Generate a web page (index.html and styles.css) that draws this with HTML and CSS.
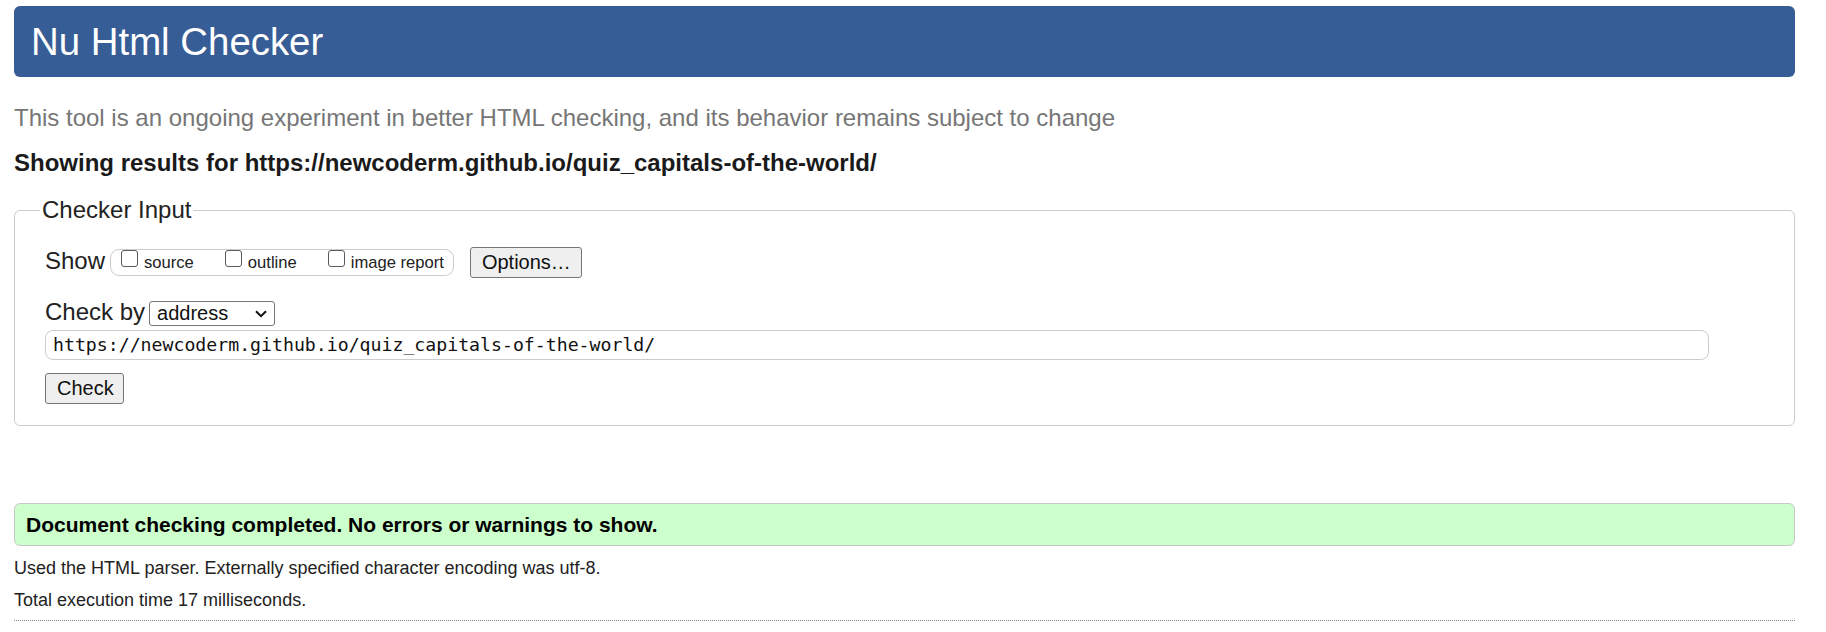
FILE: index.html
```html
<!DOCTYPE html>
<html lang="en">
<head>
<meta charset="utf-8">
<title>Nu Html Checker</title>
<link rel="stylesheet" href="styles.css">
</head>
<body>
<header class="masthead"><h1 class="title">Nu Html Checker</h1></header>
<p class="tagline">This tool is an ongoing experiment in better HTML checking, and its behavior remains subject to change</p>
<p class="showing">Showing results for https://newcoderm.github.io/quiz_capitals-of-the-world/</p>
<fieldset class="inputbox">
  <legend class="legend">Checker Input</legend>
  <div class="row row-show">
    <span class="label">Show</span>
    <span class="group">
      <span class="opt"><span class="cb"></span><span class="opt-text">source</span></span>
      <span class="opt"><span class="cb"></span><span class="opt-text">outline</span></span>
      <span class="opt"><span class="cb"></span><span class="opt-text">image report</span></span>
    </span>
    <span class="btn btn-options">Options…</span>
  </div>
  <div class="row row-by">
    <span class="label">Check by</span>
    <span class="select"><span class="select-text">address</span>
      <svg class="chev" width="12" height="8" viewBox="0 0 12 8"><path d="M1 1.2 L6 6.2 L11 1.2" fill="none" stroke="#111" stroke-width="2"/></svg>
    </span>
  </div>
  <div class="url">https://newcoderm.github.io/quiz_capitals-of-the-world/</div>
  <span class="btn btn-check">Check</span>
</fieldset>
<div class="success">Document checking completed. No errors or warnings to show.</div>
<p class="info">Used the HTML parser. Externally specified character encoding was utf-8.</p>
<p class="info info-2">Total execution time 17 milliseconds.</p>
<hr class="dots">
</body>
</html>
```
FILE: styles.css
```css
html, body { background: #fff; }
body {
  margin: 0;
  padding: 6px 31px 0 14px;
  font-family: "Liberation Sans", Arial, sans-serif;
  color: #222;
}
.masthead {
  height: 71px;
  background: #365d95;
  border-radius: 6px;
  padding-left: 17px;
}
.title {
  margin: 0;
  font-size: 38.4px;
  font-weight: normal;
  line-height: 71px;
  color: #fff;
}
.tagline {
  margin: 27px 0 0;
  font-size: 24px;
  line-height: 28px;
  color: #767676;
}
.showing {
  margin: 17px 0 0;
  font-size: 24px;
  line-height: 28px;
  font-weight: bold;
  color: #1a1a1a;
}
.inputbox {
  margin: 19px 0 0;
  border: 1px solid #ccc;
  border-radius: 6px;
  padding: 23px 0 21px 30px;
}
.legend {
  margin-left: -5px;
  padding: 0 2px;
  font-size: 24px;
  line-height: 28px;
  color: #222;
}
.row {
  display: flex;
  align-items: center;
}
.row-show { height: 31px; }
.label {
  font-size: 24px;
  line-height: 28px;
  padding-bottom: 3px;
  color: #222;
}
.group {
  margin-left: 5px;
  height: 25px;
  border: 1px solid #ccc;
  border-radius: 9px;
  display: flex;
  align-items: flex-start;
  padding: 0 9px 0 10px;
  gap: 31px;
}
.opt {
  display: flex;
  align-items: flex-start;
  gap: 6px;
}
.cb {
  width: 15px;
  height: 15px;
  border: 1.3px solid #5a5a5a;
  border-radius: 3px;
  background: #fff;
}
.opt-text {
  font-size: 16.6px;
  line-height: 18px;
  padding-top: 4px;
  color: #222;
}
.btn {
  display: inline-flex;
  align-items: center;
  box-sizing: border-box;
  height: 31px;
  border: 1px solid #767676;
  border-radius: 3px;
  background: #efefef;
  font-size: 20px;
  color: #111;
}
.btn-options {
  margin-left: 16px;
  width: 112px;
  padding-left: 11px;
}
.row-by {
  margin-top: 23px;
  height: 25px;
}
.select {
  margin-left: 4px;
  box-sizing: border-box;
  width: 126px;
  height: 25px;
  border: 1px solid #767676;
  border-radius: 3px;
  display: flex;
  align-items: center;
  justify-content: space-between;
  padding: 0 7px 0 7px;
  background: #fff;
}
.select-text {
  font-size: 20px;
  line-height: 23px;
  color: #111;
}
.chev { display: block; margin-top: 1px; }
.url {
  margin-top: 4px;
  box-sizing: border-box;
  width: 1664px;
  height: 30px;
  border: 1px solid #ccc;
  border-radius: 8px;
  padding-left: 7px;
  font-family: "DejaVu Sans Mono", "Liberation Mono", monospace;
  font-size: 18.2px;
  line-height: 28px;
  color: #111;
}
.btn-check {
  margin-top: 13px;
  width: 79px;
  padding-left: 11px;
}
.success {
  margin-top: 77px;
  box-sizing: border-box;
  height: 43px;
  border: 1px solid #c8c8c8;
  border-radius: 6px;
  background: #ccffcc;
  padding-left: 11px;
  font-size: 21px;
  font-weight: bold;
  line-height: 41px;
  color: #000;
}
.info {
  margin: 12px 0 0;
  font-size: 18px;
  line-height: 21px;
  color: #222;
}
.info-2 { margin-top: 11px; }
.dots {
  margin: 9px 0 0;
  border: 0;
  border-top: 1px dotted #888;
  height: 0;
}
```
